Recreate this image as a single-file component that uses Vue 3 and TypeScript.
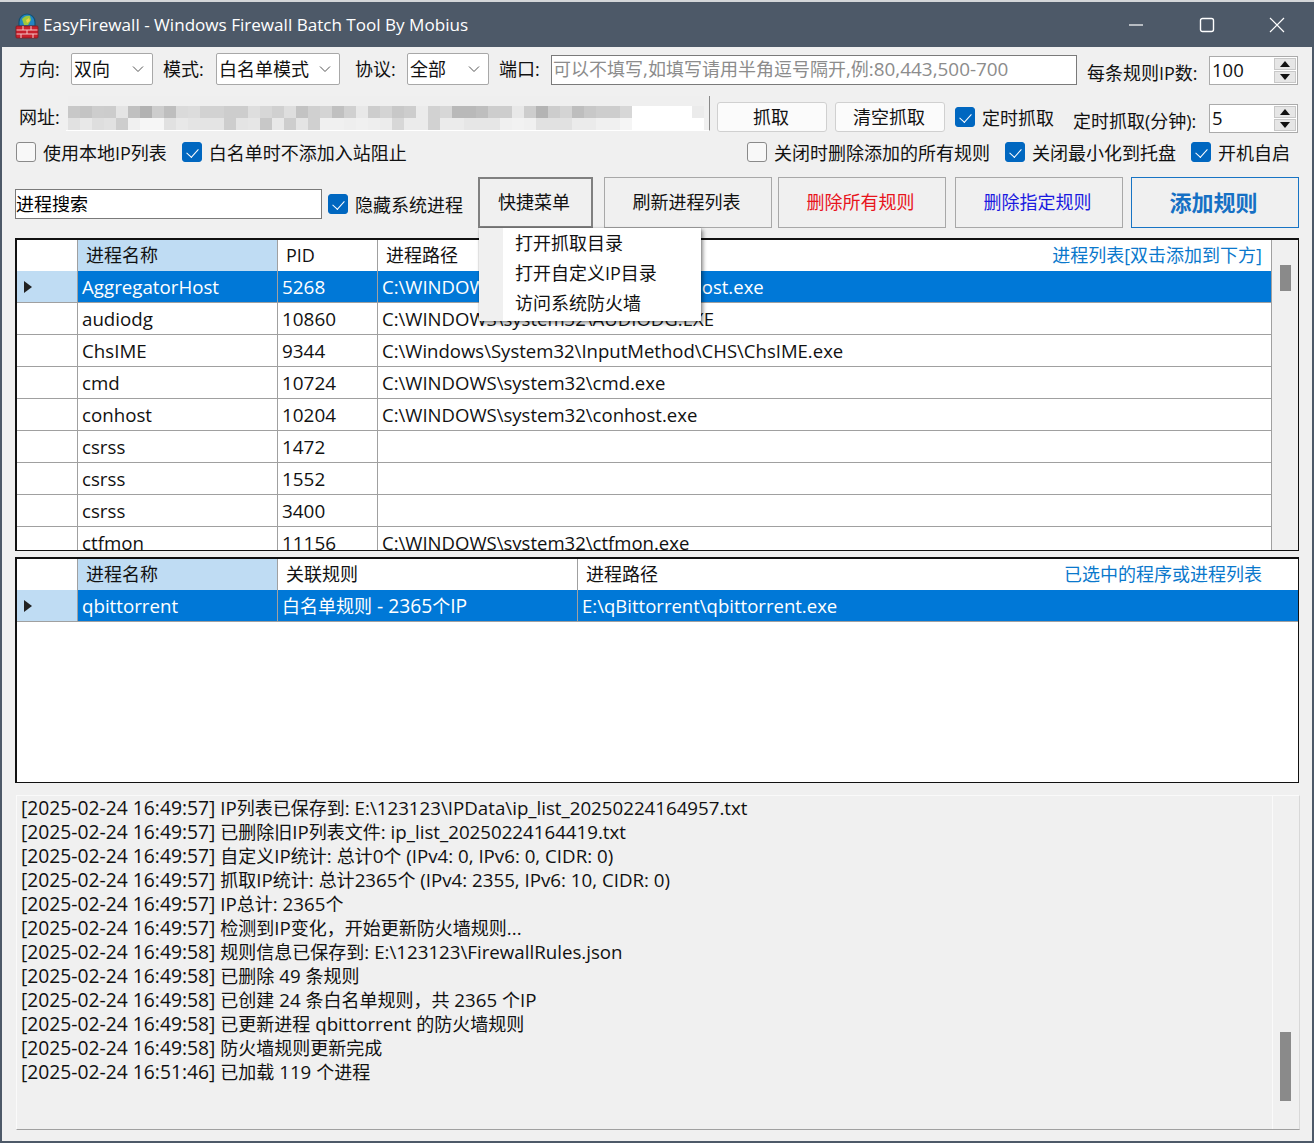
<script setup lang="ts">
import { h } from 'vue'

const T = (props: { t: string }) =>
  props.t
    .split(/([\x20-\x7e]+)/)
    .filter((s) => s.length > 0)
    .map((s) => (/^[\x20-\x7e]+$/.test(s) ? h('span', { class: 'lat' }, s) : h('span', s)))
T.props = ['t']

const procs = [
  ['AggregatorHost', '5268', 'C:\\WINDOWS\\system32\\AggregatorHost.exe'],
  ['audiodg', '10860', 'C:\\WINDOWS\\system32\\AUDIODG.EXE'],
  ['ChsIME', '9344', 'C:\\Windows\\System32\\InputMethod\\CHS\\ChsIME.exe'],
  ['cmd', '10724', 'C:\\WINDOWS\\system32\\cmd.exe'],
  ['conhost', '10204', 'C:\\WINDOWS\\system32\\conhost.exe'],
  ['csrss', '1472', ''],
  ['csrss', '1552', ''],
  ['csrss', '3400', ''],
  ['ctfmon', '11156', 'C:\\WINDOWS\\system32\\ctfmon.exe'],
]
const logs = [
  ['[2025-02-24 16:49:57] ', 'IP列表已保存到: E:\\123123\\IPData\\ip_list_20250224164957.txt'],
  ['[2025-02-24 16:49:57] ', '已删除旧IP列表文件: ip_list_20250224164419.txt'],
  ['[2025-02-24 16:49:57] ', '自定义IP统计: 总计0个 (IPv4: 0, IPv6: 0, CIDR: 0)'],
  ['[2025-02-24 16:49:57] ', '抓取IP统计: 总计2365个 (IPv4: 2355, IPv6: 10, CIDR: 0)'],
  ['[2025-02-24 16:49:57] ', 'IP总计: 2365个'],
  ['[2025-02-24 16:49:57] ', '检测到IP变化，开始更新防火墙规则...'],
  ['[2025-02-24 16:49:58] ', '规则信息已保存到: E:\\123123\\FirewallRules.json'],
  ['[2025-02-24 16:49:58] ', '已删除 49 条规则'],
  ['[2025-02-24 16:49:58] ', '已创建 24 条白名单规则，共 2365 个IP'],
  ['[2025-02-24 16:49:58] ', '已更新进程 qbittorrent 的防火墙规则'],
  ['[2025-02-24 16:49:58] ', '防火墙规则更新完成'],
  ['[2025-02-24 16:51:46] ', '已加载 119 个进程'],
]
const menu = ['打开抓取目录', '打开自定义IP目录', '访问系统防火墙']

const mid = [200, 196, 205, 204, 228, 192, 178, 205, 190, 218, 220, 210, 210, 205, 205, 222, 215, 208, 222, 195, 208, 212, 192, 208, 232, 205, 212, 200, 205, 235, 210, 215, 185, 185, 190, 205, 205, 232, 205, 180, 205, 212, 190, 200, 205, 205, 215, 255, 255, 255, 255, 255, 235]
const low = [225, 232, 222, 225, 205, 240, 246, 246, 225, 232, 228, 228, 228, 205, 228, 230, 200, 232, 205, 228, 208, 240, 240, 238, 240, 238, 236, 215, 235, 235, 210, 235, 235, 230, 230, 230, 240, 242, 240, 225, 225, 225, 235, 235, 240, 240, 245, 255, 255, 255, 255, 255, 255]
const blurCells: string[] = [
  ...mid.map(() => 'rgb(239,239,239)'),
  ...mid.map((v) => `rgb(${v},${v},${v})`),
  ...low.map((v) => `rgb(${v},${v},${v})`),
]
</script>

<template>
  <div class="window">
    <header class="titlebar">
      <svg class="app-icon" viewBox="0 0 24 28" width="24" height="28" aria-hidden="true">
        <path d="M4 15v-4a8 8 0 0 1 16 0v4z" fill="#2285c4" stroke="#16506f" stroke-width="1.2" />
        <path d="M7 8c2-3 6-4 8-3l1 4-3 5H9z" fill="#9dc83c" />
        <path d="M11 9l3-2 1 3-3 2z" fill="#f0d040" />
        <rect x="1" y="15" width="22" height="12" rx="1" fill="#c8202c" stroke="#7e1a20" stroke-width="0.8" />
        <path d="M1.5 19h21M1.5 23h21M8 15v4M16 15v4M12 19v4M6 23v4M18 23v4" stroke="#f2c8c8" stroke-width="1" fill="none" />
      </svg>
      <span class="title">EasyFirewall - Windows Firewall Batch Tool By Mobius</span>
      <div class="winbtn">
        <svg width="16" height="16" viewBox="0 0 16 16"><path d="M1 8h14" stroke="#fff" stroke-width="1.2" /></svg>
      </div>
      <div class="winbtn">
        <svg width="16" height="16" viewBox="0 0 16 16"><rect x="1.5" y="1.5" width="13" height="13" rx="2" fill="none" stroke="#fff" stroke-width="1.4" /></svg>
      </div>
      <div class="winbtn last">
        <svg width="16" height="16" viewBox="0 0 16 16"><path d="M1 1l14 14M15 1L1 15" stroke="#fff" stroke-width="1.2" /></svg>
      </div>
    </header>

    <main class="content">
      <div class="row row1">
        <span class="lbl w52 up1">方向:</span>
        <div class="select w82"><span>双向</span><svg class="chev" width="12" height="8" viewBox="0 0 12 8"><path d="M1 1.5l5 5 5-5" fill="none" stroke="#555" /></svg></div>
        <span class="lbl ml10 w53 up1">模式:</span>
        <div class="select w124"><span>白名单模式</span><svg class="chev" width="12" height="8" viewBox="0 0 12 8"><path d="M1 1.5l5 5 5-5" fill="none" stroke="#555" /></svg></div>
        <span class="lbl ml15 w52 up1">协议:</span>
        <div class="select w82"><span>全部</span><svg class="chev" width="12" height="8" viewBox="0 0 12 8"><path d="M1 1.5l5 5 5-5" fill="none" stroke="#555" /></svg></div>
        <span class="lbl ml10 w52 up1">端口:</span>
        <div class="port"><T t="可以不填写,如填写请用半角逗号隔开,例:80,443,500-700" /></div>
        <span class="lbl ml10 w122 low">每条规则IP数:</span>
        <div class="spin">
          <span>100</span>
          <div class="spin-btns"><i class="up"></i><i class="down"></i></div>
        </div>
      </div>

      <div class="row row2">
        <span class="lbl w47 up1">网址:</span>
        <div class="blur">
          <i v-for="(c, i) in blurCells" :key="i" :style="{ background: c }"></i>
        </div>
        <button class="soft grab">抓取</button>
        <button class="soft clear">清空抓取</button>
        <label class="check timer"><i class="box on"></i>定时抓取</label>
        <span class="lbl w136 low2">定时抓取(分钟):</span>
        <div class="spin spin2">
          <span>5</span>
          <div class="spin-btns"><i class="up"></i><i class="down"></i></div>
        </div>
      </div>

      <div class="row row3">
        <label class="check"><i class="box"></i>使用本地IP列表</label>
        <label class="check gap15"><i class="box on"></i>白名单时不添加入站阻止</label>
        <div class="grow"></div>
        <label class="check"><i class="box"></i>关闭时删除添加的所有规则</label>
        <label class="check gap15"><i class="box on"></i>关闭最小化到托盘</label>
        <label class="check gap15"><i class="box on"></i>开机自启</label>
      </div>

      <div class="row row4">
        <input class="search" value="进程搜索" />
        <label class="check hide"><i class="box on"></i>隐藏系统进程</label>
        <div class="menu-wrap">
          <button class="flat quick">快捷菜单</button>
          <ul class="menu">
            <li v-for="m in menu" :key="m">{{ m }}</li>
          </ul>
        </div>
        <button class="flat refresh">刷新进程列表</button>
        <button class="flat del red">删除所有规则</button>
        <button class="flat del blue">删除指定规则</button>
        <button class="flat add">添加规则</button>
      </div>

      <section class="grid g1">
        <div class="table">
          <div class="tr head">
            <div class="c rh"></div>
            <div class="c name sel">进程名称</div>
            <div class="c pid">PID</div>
            <div class="c path"><span>进程路径</span><span class="hint">进程列表[双击添加到下方]</span></div>
          </div>
          <div v-for="(p, i) in procs" :key="i" class="tr body" :class="{ active: i === 0 }">
            <div class="c rh"><i v-if="i === 0" class="tri"></i></div>
            <div class="c name"><T :t="p[0]" /></div>
            <div class="c pid"><T :t="p[1]" /></div>
            <div class="c path"><span><T :t="p[2]" /></span></div>
          </div>
        </div>
        <div class="vscroll"><i class="thumb"></i></div>
      </section>

      <section class="grid g2">
        <div class="table">
          <div class="tr head">
            <div class="c rh"></div>
            <div class="c name sel">进程名称</div>
            <div class="c rule">关联规则</div>
            <div class="c path"><span>进程路径</span><span class="hint h2">已选中的程序或进程列表</span></div>
          </div>
          <div class="tr body active">
            <div class="c rh"><i class="tri"></i></div>
            <div class="c name"><T t="qbittorrent" /></div>
            <div class="c rule"><T t="白名单规则 - 2365个IP" /></div>
            <div class="c path"><span><T t="E:\qBittorrent\qbittorrent.exe" /></span></div>
          </div>
        </div>
      </section>

      <section class="log">
        <div class="log-text">
          <div v-for="(l, i) in logs" :key="i" class="line"><span class="stamp">{{ l[0] }}</span><T :t="l[1]" /></div>
        </div>
        <div class="log-scroll"><i class="log-thumb"></i></div>
      </section>
    </main>
  </div>
</template>

<style>
html, body { margin: 0; background: #d4d6d9; }
.lat { font-size: var(--lat, 1.04em); }
</style>

<style scoped>
* { box-sizing: border-box; }
.window {
  width: 1314px;
  height: 1141px;
  margin-top: 2px;
  border: 2px solid #4d5968;
  border-top: 0;
  background: #f0f0f0;
  font-family: "Open Sans", "Noto Sans CJK SC", sans-serif;
  font-size: 18px;
  color: #111;
  overflow: hidden;
}
.titlebar {
  height: 45px;
  background: #4d5968;
  display: flex;
  align-items: center;
  color: #fff;
  padding-left: 13px;
}
.app-icon { margin-right: 4px; flex: none; }
.title { flex: 1; font-size: 17.08px; white-space: nowrap; padding-bottom: 1px; }
.winbtn { width: 71px; display: flex; justify-content: center; }
.winbtn.last { width: 70px; }
.content { padding: 6px 13px 0; }
.row { display: flex; align-items: center; white-space: nowrap; }
.row1 { height: 32px; padding-left: 4px; }
.row2 { height: 33px; margin-top: 15px; padding-left: 4px; }
.row3 { height: 27px; margin-top: 7px; padding-bottom: 4px; padding-left: 1px; width: 1275px; }
.row4 { height: 51px; margin-top: 10px; }
.lbl { display: block; flex: none; }
.up1 { margin-bottom: 2px; }
.low { margin-top: 6px; }
.low2 { margin-top: 6px; }
.w52 { width: 52px; }
.w53 { width: 53px; }
.w47 { width: 47px; }
.w122 { width: 122px; }
.w136 { width: 136px; }
.ml10 { margin-left: 10px; }
.ml15 { margin-left: 15px; }
.w82 { width: 82px; }
.w124 { width: 124px; }
.select {
  height: 32px;
  background: #fff;
  border: 1px solid #a8a8a8;
  border-radius: 2px;
  padding: 0 0 2px 2px;
  display: flex;
  align-items: center;
  justify-content: space-between;
  flex: none;
}
.chev { margin-right: 8px; margin-top: 2px; }
.port {
  --lat: 1.05em;
  width: 526px;
  height: 30px;
  margin-top: 2px;
  border: 1px solid #7a7a7a;
  background: #fff;
  padding: 0 1px;
  line-height: 26px;
  color: #8c8c8c;
  flex: none;
}
.spin {
  width: 89px;
  height: 29px;
  margin-top: 3px;
  border: 1px solid #ababab;
  background: #fff;
  display: flex;
  justify-content: space-between;
  padding-left: 2px;
  line-height: 26px;
  font-size: 18.5px;
  flex: none;
}
.spin2 { margin-top: 4px; }
.spin-btns { width: 22px; margin: 1px; display: flex; flex-direction: column; gap: 1px; }
.spin-btns i {
  flex: 1;
  background: #e6e6e6;
  border: 1px solid #c8c8c8;
  position: relative;
}
.spin-btns i::after {
  content: "";
  position: absolute;
  left: 50%;
  top: 50%;
  margin: -3px 0 0 -5px;
  border-left: 5px solid transparent;
  border-right: 5px solid transparent;
}
.spin-btns .up::after { border-bottom: 6px solid #111; }
.spin-btns .down::after { border-top: 6px solid #111; }
.blur {
  width: 644px;
  height: 35px;
  align-self: flex-start;
  margin-top: -4px;
  padding-left: 2px;
  display: grid;
  grid-template-columns: repeat(53, 12px);
  grid-template-rows: 10px 12px 12px;
  border-right: 1px solid #8a8a8a;
  border-bottom: 1px solid #fff;
  flex: none;
}
.blur i { display: block; }
.soft {
  width: 110px;
  height: 30px;
  background: #fbfbfb;
  border: 1px solid #d0d0d0;
  border-radius: 3px;
  font: inherit;
  color: #111;
  padding: 0 2px 2px 0;
  flex: none;
}
.grab { margin-left: 7px; }
.clear { margin-left: 8px; }
.check { display: inline-flex; align-items: center; flex: none; }
.box {
  width: 20px;
  height: 20px;
  border: 1px solid #8a8a8a;
  border-radius: 3px;
  background: #f8f8f8;
  margin-right: 7px;
  position: relative;
  flex: none;
}
.box.on { background: #0067c0; border-color: #0067c0; }
.box.on::after {
  content: "";
  position: absolute;
  left: 6px;
  top: 3px;
  width: 6px;
  height: 10px;
  border: solid #fff;
  border-width: 0 1.6px 1.6px 0;
  transform: rotate(42deg);
}
.timer { margin-left: 10px; width: 118px; }
.gap15 { margin-left: 15px; }
.grow { flex: 1; }
.search {
  width: 307px;
  height: 30px;
  margin-top: 3px;
  border: 1px solid #7a7a7a;
  background: #fff;
  font: inherit;
  padding: 0 1px 2px 0;
  outline: none;
  flex: none;
}
.hide { margin-left: 6px; margin-top: 3px; width: 150px; }
.menu-wrap { position: relative; flex: none; height: 51px; }
.flat {
  height: 51px;
  background: #f0f0f0;
  border: 1px solid #a8a8a8;
  font: inherit;
  color: #111;
  padding: 0 3px 3px 0;
  flex: none;
}
.quick { width: 115px; border: 2px solid #808080; }
.refresh { width: 168px; margin-left: 11px; }
.del { width: 168px; }
.red { margin-left: 6px; color: #e8141c; }
.blue { margin-left: 9px; color: #1a1ae0; }
.add {
  width: 168px;
  margin-left: 8px;
  border-color: #1874c4;
  color: #1670c4;
  font-weight: 700;
  font-size: 22px;
}
.menu {
  position: absolute;
  left: 1px;
  top: 51px;
  width: 222px;
  height: 93px;
  margin: 0;
  padding: 0;
  list-style: none;
  background: linear-gradient(to right, #f0f0f0 24px, #fff 24px);
  box-shadow: 2px 2px 4px rgba(0, 0, 0, 0.45), 0 0 1px rgba(0, 0, 0, 0.4);
  z-index: 5;
}
.menu li { height: 30px; line-height: 30px; padding-left: 36px; }
.grid {
  border: 1px solid #111;
  border-width: 2px 1px 1px 2px;
  background: #fff;
  display: flex;
  overflow: hidden;
}
.g1 { height: 313px; margin-top: 10px; }
.g2 { height: 226px; margin-top: 6px; }
.table { flex: 1; min-width: 0; }
.tr { display: flex; height: 32px; line-height: 32px; border-bottom: 1px solid #a0a0a0; }
.head { height: 31px; line-height: 31px; border-bottom: 0; }
.head .c { padding-left: 8px; }
.c { border-right: 1px solid #a0a0a0; padding-left: 4px; flex: none; overflow: hidden; white-space: nowrap; }
.rh { width: 61px; position: relative; padding: 0; }
.name { width: 200px; }
.pid { width: 100px; --lat: 1.05em; }
.rule { width: 300px; --lat: 1.07em; }
.path { flex: 1; border-right: 0; display: flex; justify-content: space-between; --lat: 1.03em; }
.g1 .path { border-right: 1px solid #a0a0a0; }
.head .rh { background: #fff; }
.sel { background: #bfdcf3; }
.hint { color: #0a78cc; margin-right: 9px; }
.h2 { margin-right: 36px; }
.active { background: #0078d7; color: #fff; }
.active .rh { background: #bfdcf3; }
.tri {
  position: absolute;
  left: 7px;
  top: 10px;
  border-left: 8px solid #222;
  border-top: 6px solid transparent;
  border-bottom: 6px solid transparent;
}
.vscroll { width: 26px; flex: none; background: #f0f0f0; padding: 25px 0 0 8px; }
.thumb { display: block; width: 11px; height: 26px; background: #8a8a8a; }
.log {
  --lat: 1.04em;
  height: 335px;
  width: 1284px;
  margin-top: 12px;
  margin-left: 1px;
  display: flex;
  border-bottom: 1px solid #a0a0a0;
  border-top: 1px solid #fafafa;
  border-left: 1px solid #fafafa;
  border-right: 1px solid #d8d8d8;
}
.log-text { flex: 1; padding-left: 4px; white-space: pre; }
.stamp { font-size: 1.071em; }
.line { height: 24px; line-height: 24px; }
.log-scroll { width: 27px; flex: none; border-left: 1px solid #fafafa; padding: 236px 0 0 7px; }
.log-thumb { display: block; width: 11px; height: 69px; background: #8a8a8a; }
</style>
